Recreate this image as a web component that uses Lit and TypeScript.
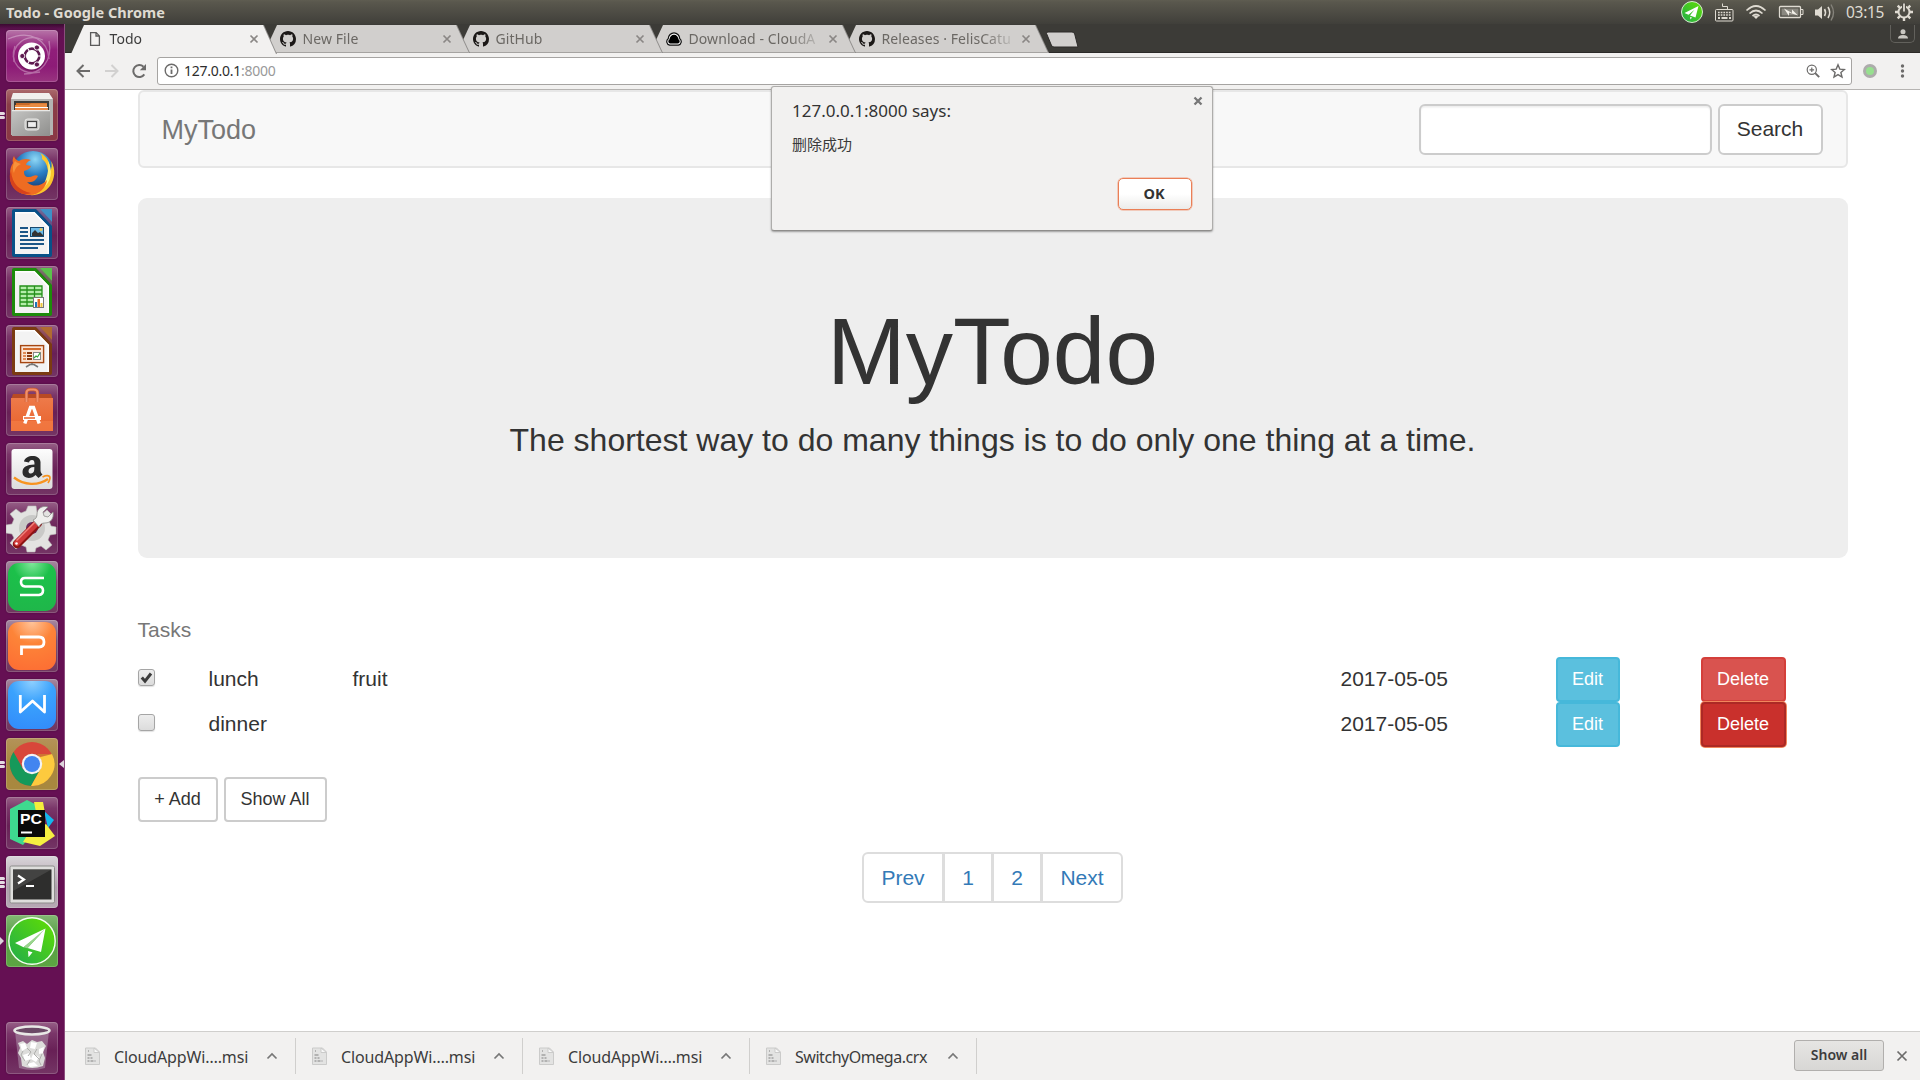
import { LitElement, html, svg, css, nothing, TemplateResult } from "lit";
import { customElement, property } from "lit/decorators.js";
import { classMap } from "lit/directives/class-map.js";

const octocat = svg`<path fill="#1b1817" d="M8 0C3.58 0 0 3.58 0 8c0 3.54 2.29 6.53 5.47 7.59.4.07.55-.17.55-.38 0-.19-.01-.82-.01-1.49-2.01.37-2.53-.49-2.69-.94-.09-.23-.48-.94-.82-1.13-.28-.15-.68-.52-.01-.53.63-.01 1.08.58 1.23.82.72 1.21 1.87.87 2.33.66.07-.52.28-.87.51-1.07-1.78-.2-3.64-.89-3.64-3.95 0-.87.31-1.59.82-2.15-.08-.2-.36-1.02.08-2.12 0 0 .67-.21 2.2.82.64-.18 1.32-.27 2-.27s1.36.09 2 .27c1.53-1.04 2.2-.82 2.2-.82.44 1.1.16 1.92.08 2.12.51.56.82 1.27.82 2.15 0 3.07-1.87 3.75-3.65 3.95.29.25.54.73.54 1.48 0 1.07-.01 1.93-.01 2.2 0 .21.15.46.55.38A8.01 8.01 0 0 0 16 8c0-4.42-3.58-8-8-8z"/>`;
const blankDoc = svg`<path fill="none" stroke="#5a5a5a" stroke-width="1.3" d="M3.6 1.6h5.6l3.2 3.3v9.5H3.6zM9 1.8V5h3.2"/>`;
const cloudApp = svg`<path d="M3.6 14.2a3.6 3.6 0 0 1-1.4-6.4C2.4 4.400 5 1.800 8 1.800s5.600 2.600 5.800 6a3.600 3.600 0 0 1-1.400 6.400z" fill="#fff" stroke="#111" stroke-width="1.2"/><path d="M4.200 12.600a2.200 2.200 0 0 1-.8-4.100C3.600 5.800 5.500 3.700 8 3.700s4.400 2.100 4.600 4.800a2.200 2.200 0 0 1-.8 4.100z" fill="#000"/>`;

interface TabInfo { title: string; icon: TemplateResult; active?: boolean; cut?: boolean; }
const tabs: TabInfo[] = [
  { title: "Todo", icon: blankDoc, active: true },
  { title: "New File", icon: octocat },
  { title: "GitHub", icon: octocat },
  { title: "Download - CloudA", icon: cloudApp, cut: true },
  { title: "Releases · FelisCatu", icon: octocat, cut: true },
];

// Common shapes of the office documents in the launcher.
const officeDoc = (dark: string, light: string, body: TemplateResult) => svg`
  <path d="M8 2h22l16 17v29a2 2 0 0 1-2 2H8a2 2 0 0 1-2-2V4a2 2 0 0 1 2-2z" fill="${dark}"/>
  <path d="M34 2h12v13z" fill="${light}"/><path d="M31 2h3l12 13v4z" fill="${light}" opacity=".35"/>
  <path d="M9 5h19.500L43 20v27H9z" fill="#f3f3f3"/><path d="M9 5h19.500L43 20v27h-1.500V21L28 6.500H9z" fill="#fff"/>
  ${body}`;

const paperPlane = svg`
  <circle cx="26" cy="26" r="23.200" fill="url(#plane)" stroke="#f4fff0" stroke-width="1.400"/>
  <path d="M39.500 13.500 9 28l8.500 4.300L35 18.500 21.500 33l13.500 4z" fill="#fff"/>
  <path d="M22 36l4.500 1.200-4 5z" fill="#fff"/>
  <path d="M39.500 13.500 17.500 32.300l4 1z" fill="#9bd390"/>`;

interface AppTile { name: string; kind?: string; pips?: number; arrow?: boolean; focused?: boolean; icon: TemplateResult; }
const apps: AppTile[] = [
  { name: "Dash", kind: "dash", icon: svg`
    <g fill="none" stroke="#fff" opacity=".32" stroke-width="1.300">
      <path d="M2 9c22-10 40 1 41 20"/><path d="M43 11c4 20-8 33-25 33"/><path d="M34 42C14 46 3 32 9 16"/><path d="M8 32C5 14 20 3 37 10"/></g>
    <circle cx="25.500" cy="27" r="14" fill="#3a0030" opacity=".3"/><circle cx="25.500" cy="26" r="13.500" fill="#fff"/>
    <circle cx="26" cy="26" r="7.300" fill="none" stroke="#5e1a50" stroke-width="2.700"/>
    <g stroke="#fff" stroke-width="1.100"><path d="M26 26l9 0M26 26l-4.500-8M26 26l-4.500 8"/></g><circle cx="26" cy="26" r="5.700" fill="#fff"/>
    <g fill="#5e1a50" stroke="#fff" stroke-width=".9"><circle cx="16.300" cy="26" r="2.600"/><circle cx="30.900" cy="17.500" r="2.600"/><circle cx="30.900" cy="34.500" r="2.600"/></g>` },
  { name: "Files", kind: "files", pips: 2, icon: svg`
    <path d="M7 4h36l4 10v31l-4 2H8l-3-2V14z" fill="#a9a9a7"/><path d="M7 4h36l4 6H5z" fill="#f0f0ee"/><path d="M5 10h42v36H5z" fill="#b4b4b2"/>
    <path d="M8 12h35v11H8z" fill="#3b3b39"/><path d="M10 14h31v8H10z" fill="#c96a28"/><path d="M9 16h14l2-1.500h16V18H9z" fill="#e98b42"/><path d="M9 18h33v1.300H9z" fill="#fff"/><path d="M9 19.300h33V23H9z" fill="#ee8a45"/>
    <path d="M6 21h38v26H6z" fill="url(#cabinet)"/><path d="M6 21h38v1.300H6z" fill="#e8e8e6"/>
    <rect x="19" y="30" width="14" height="11" rx="2.500" fill="#c9c9c7" stroke="#e9e9e7"/><rect x="21.500" y="32.500" width="9" height="6" fill="#eee" stroke="#444" stroke-width="1.200"/>` },
  { name: "Firefox", icon: svg`
    <circle cx="27" cy="24" r="21" fill="url(#globe)"/>
    <path d="M34 5c8 4 10 10 10 18 2-3 2-6 1-10 5 8 4 18-1 25-6 8-16 11-25 8l10-5c10-1 15-9 13-18-1-6-2-9-6-12 0-3 0-4-2-6z" fill="#fbc52c"/>
    <path d="M42 13c5 9 4 21-6 28l4-10c2-6 3-12 2-18z" fill="#fff07a"/>
    <path d="M8 8c1 3 2 4 5 5 3-2 7-3 12-1-3 1-5 3-5 5l5 1c-1 3-4 4-7 5 0 4 1 6 5 6 4 0 6-3 9-1-2 4-5 7-11 6 6 6 15 4 20-2-1 8-8 15-17 15C12 47 3 38 4 26c0-5 1-8 3-11-1-3 0-5 1-7z" fill="#ee6c22"/>
    <path d="M5 23c1 13 9 20 20 22-9 4-23-4-21-19z" fill="#d6421c"/><path d="M9 13c-2 3-3 8-1 12 1-5 4-8 7-9-2-1-4-1-6-3z" fill="#f9913a"/>` },
  { name: "Writer", icon: officeDoc("#085188", "#3e91c6", svg`
    <g fill="#1b5687"><path d="M14 20h8v2h-8zM14 24h8v2h-8zM14 28h8v2h-8zM14 32h24v2H14zM14 36h24v2H14zM14 40h18v2H14z"/></g>
    <rect x="24.500" y="20.500" width="13" height="9" fill="#6dbbe8" stroke="#17496f"/><path d="M26 29v-3l3-3 3 3 2-1 3 3v1z" fill="#333"/><circle cx="35" cy="22.500" r="1.500" fill="#e8c65a"/>`) },
  { name: "Calc", icon: officeDoc("#1d8b0b", "#5bc14c", svg`
    <path d="M14 20h22v20H14z" fill="#b4edaa"/><path d="M14 20h22v20H14zM14 24h22M14 28h22M14 32h22M14 36h22M21 20v20M28.500 20v20" fill="none" stroke="#24901a" stroke-width="1.300"/>
    <rect x="27.500" y="31.500" width="10" height="10" fill="#fff" stroke="#777"/><path d="M29 36h2v5h-2z" fill="#1d75ba"/><path d="M31.500 33h2.500v8h-2.500z" fill="#e46a24"/><path d="M34.500 37h2v4h-2z" fill="#edc63b"/>`) },
  { name: "Impress", icon: officeDoc("#7b3b12", "#b06b31", svg`
    <rect x="14.600" y="20.600" width="23" height="17" fill="#fbe4d4" stroke="#a54611" stroke-width="1.400"/><path d="M17 23h18v2H17z" fill="#d36c2d"/>
    <path d="M17 27h3v2h-3zM17 30h3v2h-3zM17 33h3v2h-3z" fill="#e08a55"/><path d="M21 27h5v2h-5zM21 30h5v2h-5zM21 33h5v2h-5z" fill="#8b3a10"/>
    <rect x="27.500" y="27.500" width="7" height="7" fill="#fff" stroke="#888"/><path d="M28 33l2-2 1.500 1 2.500-4" stroke="#34a638" stroke-width="1.200" fill="none"/>
    <path d="M20 42l4-2.500h4l4 2.500M26 38v2" stroke="#777" stroke-width="1.600" fill="none"/>`) },
  { name: "Software", icon: svg`
    <path d="M7 10h38l2 6H5z" fill="#b84a24"/><path d="M5 14h42v33H5z" fill="url(#bag)"/><path d="M5 37h42v10H5z" fill="#f58049" opacity=".6"/>
    <path d="M20.500 18v-9q0-3.500 4-3.500h3q4 0 4 3.500v9" fill="none" stroke="#c9562b" stroke-width="3.400"/><path d="M20.500 18v-9q0-3.500 4-3.500h3q4 0 4 3.500v9" fill="none" stroke="#f0906c" stroke-width="2.200"/>
    <path d="M18.800 39.500 24.500 23.500h3l5.700 16" stroke="#fff" stroke-width="3.400" fill="none"/><path d="M17 32h18v4H17z" fill="#fff"/><path d="M18 33.300h11v1.500H18z" fill="#e8622c"/>` },
  { name: "Amazon", icon: svg`
    <rect x="5.500" y="6" width="41" height="40" rx="3" fill="url(#paper)"/>
    <path d="M18 18.500c1-7 16-8 16.500.5V27c0 2 .5 3 2 4.500L32.500 35l-3-3c-4 4.500-13 4-13-3 0-5 4-7.500 12-7.600 0-3-.5-4.400-2.500-4.400s-2.500 1-3 2.500zm10.300 5.500c-4 .2-5.800 1.600-5.800 4.200 0 3.400 5.800 3.200 5.800-2z" fill="#2c2c2c"/>
    <path d="M8 34.500c10 8 24 8.500 34 1.500" stroke="#f79420" stroke-width="2.400" fill="none"/><path d="M36.500 34c3-1.500 6-1.500 7-.5s0 4-1.500 6.500" stroke="#f79420" stroke-width="1.800" fill="none"/>` },
  { name: "Settings", icon: svg`
    <g fill="#e3e3e1" stroke="#bdbdbb" stroke-width=".6"><path d="M22 4h8l1 6 5 2 5-4 6 6-4 5 2 5 5 1v7l-6 1-2 5 4 5-6 5-5-4-5 2-1 4h-8l-1-5-5-2-5 4-6-6 4-5-2-4-6-1v-8l6-1 2-5-4-5 6-5 5 4 5-2z"/></g>
    <circle cx="26" cy="26" r="13" fill="#c9c9c7"/><circle cx="26" cy="26" r="6" fill="#6c2a5c"/>
    <path d="M32 21 11 42" stroke="#8d1414" stroke-width="8.500" stroke-linecap="round"/><path d="M32 20 11 41" stroke="#d03a3a" stroke-width="6" stroke-linecap="round"/><path d="M29 20 10.500 38.500" stroke="#f0827c" stroke-width="1.500"/>
    <path d="M27 18c3-1 4-3 4-6 0-5 5-9 11-7l-5 5 1 4 4 1 5-5c1 6-2 11-8 11-3 0-5 1-6 4z" fill="#efefed" stroke="#8f8f8d" stroke-width=".8"/><circle cx="10.500" cy="41.500" r="1.300" fill="#fff"/>` },
  { name: "Spreadsheets", kind: "wps", icon: svg`
    <rect x="2" y="2" width="48" height="48" rx="11" fill="url(#wpsS)"/><path d="M38 17H19q-4 0-4 4t4 4.500h14q4 0 4 4t-4 4.500H14" fill="none" stroke="#fff" stroke-width="2.600"/>` },
  { name: "Presentation", kind: "wps", icon: svg`
    <rect x="2" y="2" width="48" height="48" rx="11" fill="url(#wpsP)"/><path d="M14 17h19q5 0 5 5t-5 5H15.500v8" fill="none" stroke="#fff" stroke-width="2.800"/>` },
  { name: "Documents", kind: "wps", icon: svg`
    <rect x="2" y="2" width="48" height="48" rx="11" fill="url(#wpsW)"/><path d="M14.300 16v17L26.500 22 38.500 33V16" fill="none" stroke="#fff" stroke-width="2.800" stroke-linejoin="round"/>` },
  { name: "Chrome", kind: "chrome", pips: 2, focused: true, icon: svg`
    <circle cx="26" cy="26" r="22" fill="#d8473a"/>
    <path d="M7.500 14A22 22 0 0 0 25 48l9.500-17L26 36l-9-5z" fill="#15995a"/><path d="M46 16A22 22 0 0 1 25 48l9.500-17 1-8L31 16z" fill="#fdca3e"/>
    <path d="M26 16h20.500l-12 3z" fill="#b13a2e" opacity=".6"/><circle cx="26" cy="26" r="10.200" fill="#f3f3f3"/><circle cx="26" cy="26" r="8" fill="#4285f0"/>` },
  { name: "PyCharm", icon: svg`
    <path d="M38 14l10 9-6 8z" fill="#13b8ee"/><path d="M4 12 21 3l10 5-4 28-10 12L4 42z" fill="#3ed98f"/><path d="M28 5h9l2 11-8 4z" fill="#f4ee3c"/><path d="M40 27l9 12-15 10-17-4 5-8z" fill="#f5ef41"/>
    <rect x="12" y="13" width="27" height="27" fill="#0a0a0a"/>
    <text x="14" y="27" font-family="Liberation Sans" font-weight="700" font-size="14.500" fill="#fff" textLength="22" lengthAdjust="spacingAndGlyphs">PC</text><path d="M15 34.500h11v2H15z" fill="#fff"/>` },
  { name: "Terminal", kind: "term", pips: 3, icon: svg`
    <rect x="4" y="10" width="44.500" height="37" rx="1.500" fill="#dededc" stroke="#8d8d8b"/><rect x="7" y="13.500" width="38.500" height="30" fill="#2e2e2d"/><path d="M7 13.500h38.500L7 35z" fill="#4d4d4b" opacity=".7"/>
    <path d="M12 19.500l6 4-6 4" stroke="#fff" stroke-width="2.200" fill="none"/><path d="M20 29h8v2h-8z" fill="#fff"/>` },
  { name: "Plane", kind: "plane", arrow: true, icon: paperPlane },
];

const trash = svg`
  <path d="M9 9h34l-4 37q-13 4-26 0z" fill="#c9bcc7" opacity=".4"/>
  <path d="M12 21l5-2 4 3 5-4 5 2 5-1 4 5-3 6 2 6-2 8q-11 4-21 0l-1-8-3-5 2-5z" fill="#dcdcda"/>
  <g fill="#fff"><path d="M14 22l5-1 2 5-5 3zM25 20l6 1-2 6-5-1zM33 27l5-2-1 6-4 1zM17 33l6-2 2 6-6 2zM27 32l6 3-3 5-5-3zM21 42l7-2 4 4-8 1z"/></g>
  <g stroke="#a8a8a6" fill="none" stroke-width=".9"><path d="M21 26l4 4-3 4M31 27l-3 5 5 5M17 29l-2 4 4 6M36 32l-3 7 2 4M24 38l-3 5"/></g>
  <ellipse cx="26" cy="8.500" rx="17.500" ry="4" fill="#6b4966" stroke="#e8e8e6" stroke-width="2.600"/>`;

@customElement("launcher-tile")
class LauncherTile extends LitElement {
  @property() kind = "";
  @property({ type: Number }) pips = 0;
  @property({ type: Boolean }) arrow = false;
  @property({ type: Boolean }) focused = false;
  @property({ attribute: false }) icon: TemplateResult | null = null;
  static styles = css`
    :host { display: block; position: relative; width: 65px; height: 52px; }
    .tile { box-sizing: border-box; width: 52px; height: 52px; margin-left: 6px; border-radius: 4px; overflow: hidden;
      background: linear-gradient(#976087 0, #7a3669 22%, #682056 55%, #743565 100%);
      box-shadow: inset 0 0 0 1px rgba(255,255,255,.18), 0 0 2px rgba(0,0,0,.3); }
    .dash { background: linear-gradient(#b774a8, #901e7a 38%, #8d1b77 70%, #99347f); }
    .files { background: linear-gradient(#ab6b6d, #8a3d48 30%, #8a3844); }
    .wps { background: linear-gradient(#a688a0, #7b4e70 40%, #71355f); }
    .chrome { background: linear-gradient(#b49359, #a8873f 50%, #a8883f); }
    .term { background: linear-gradient(#d9d5d9, #aea0ac 60%, #b6a9b4); }
    .plane { background: linear-gradient(#83b873, #58a046 40%, #5ca542); }
    svg { display: block; width: 52px; height: 52px; }
    .pips { position: absolute; left: 0; top: 0; height: 52px; display: flex; flex-direction: column; justify-content: center; gap: 1px; }
    .pips i { width: 5px; height: 3px; background: #e4dbe2; border-radius: 0 2px 2px 0; }
    .left, .right { position: absolute; top: 22px; width: 0; height: 0; border: 4px solid transparent; }
    .left { left: 0; border-left-color: #ddd4dc; border-right: 0; }
    .right { right: 1px; border-right: 5px solid #ddd4dc; border-left: 0; }
  `;
  render() {
    return html`<div class="tile ${this.kind}"><svg viewBox="0 0 52 52">
      <defs>
        <linearGradient id="cabinet" x2="1" y2="1"><stop stop-color="#c4c4c2"/><stop offset="1" stop-color="#8f8f8d"/></linearGradient>
        <radialGradient id="globe" cx=".55" cy=".2" r=".8"><stop stop-color="#8fd8f6"/><stop offset=".45" stop-color="#2a7fc4"/><stop offset="1" stop-color="#10285f"/></radialGradient>
        <linearGradient id="bag" x2="0" y2="1"><stop stop-color="#ee7a4a"/><stop offset="1" stop-color="#e8622c"/></linearGradient>
        <linearGradient id="paper" x2="0" y2="1"><stop stop-color="#fdfdfd"/><stop offset="1" stop-color="#dcdcdc"/></linearGradient>
        <radialGradient id="wpsS" cx=".5" cy="0" r="1"><stop stop-color="#7fe79a"/><stop offset=".4" stop-color="#1cc04a"/><stop offset="1" stop-color="#1fb74a"/></radialGradient>
        <radialGradient id="wpsP" cx=".5" cy="0" r="1"><stop stop-color="#ffc49a"/><stop offset=".45" stop-color="#fd8438"/><stop offset="1" stop-color="#fd7034"/></radialGradient>
        <radialGradient id="wpsW" cx=".5" cy="0" r="1"><stop stop-color="#8fd0ff"/><stop offset=".45" stop-color="#3aa2fd"/><stop offset="1" stop-color="#338efb"/></radialGradient>
        <linearGradient id="plane" x1="0" y1="1" x2="1" y2="0"><stop stop-color="#1fab4d"/><stop offset="1" stop-color="#62e000"/></linearGradient>
      </defs>${this.icon}</svg></div>
      ${this.pips ? html`<div class="pips">${Array.from({ length: this.pips }, () => html`<i></i>`)}</div>` : nothing}
      ${this.arrow ? html`<div class="left"></div>` : nothing}
      ${this.focused ? html`<div class="right"></div>` : nothing}`;
  }
}

@customElement("todo-page")
class TodoPage extends LitElement {
  static styles = css`
    :host { display: block; box-sizing: border-box; padding: 0 72.500px; background: #fff; color: #333;
      font: 21px/30px "Liberation Sans", Arial, sans-serif; }
    .nav { box-sizing: border-box; height: 78px; border: 2px solid #e7e7e7; border-radius: 6px; background: #f8f8f8;
      display: flex; align-items: center; padding: 0 23px 0 22px; }
    .brand { flex: 1; font-size: 27px; color: #777; padding-top: 1px; }
    .field { box-sizing: border-box; width: 293px; height: 51px; border: 2px solid #ccc; border-radius: 6px; background: #fff;
      box-shadow: inset 0 1.500px 1.500px rgba(0,0,0,.075); margin-right: 6px; outline: none; }
    .btn { box-sizing: border-box; display: inline-flex; align-items: center; justify-content: center; border: 2px solid #ccc; white-space: nowrap;
      border-radius: 4px; background: #fff; color: #333; height: 45px; font: 18px/27px "Liberation Sans", Arial, sans-serif; padding: 0; }
    .search { width: 105px; height: 51px; font-size: 21px; border-radius: 6px; padding-bottom: 2px; }
    .hero { box-sizing: border-box; height: 360px; margin-top: 30px; padding-top: 101px; border-radius: 9px; background: #eee; text-align: center; }
    h1 { margin: 0 0 15px; font-size: 94.500px; line-height: 104px; font-weight: 400; }
    .lead { margin: 0; font-size: 32px; line-height: 45px; }
    .caption { margin-top: 57px; height: 42px; color: #777; }
    .row { display: grid; grid-template-columns: 71px 144px 988px 215px 145px 86px; height: 45px; align-items: center; }
    .cell { padding-bottom: 2px; }
    .check { box-sizing: border-box; width: 17px; height: 17px; margin-top: -4px; border: 1px solid #a5a5a5; border-radius: 3px;
      background: linear-gradient(#ededed, #dcdcdc); box-shadow: 0 1px 1px rgba(0,0,0,.12); }
    .check svg { display: block; width: 15px; height: 15px; }
    .edit { width: 64px; background: #5bc0de; border-color: #46b8da; color: #fff; }
    .del { width: 85px; background: #d9534f; border-color: #d43f3a; color: #fff; }
    .del.on { background: #c9302c; border-color: #ac2925; box-shadow: 0 0 0 1px #f2865c; }
    .tools { display: flex; gap: 6px; margin-top: 30px; }
    .add { width: 80px; } .all { width: 103px; }
    .pages { display: flex; width: 261px; height: 51px; box-sizing: border-box; margin: 30px auto 0; border: 2px solid #ddd; border-radius: 6px; color: #337ab7; }
    .pages span { box-sizing: border-box; display: flex; align-items: center; justify-content: center; flex: 1; border-left: 3px solid #ddd; }
    .pages span:first-child { flex: 0 0 78px; border-left: 0; }
    .pages span:last-child { flex: 0 0 81px; }
  `;
  private rows = [
    { done: true, name: "lunch", note: "fruit", date: "2017-05-05", on: false },
    { done: false, name: "dinner", note: "", date: "2017-05-05", on: true },
  ];
  render() {
    return html`
      <nav class="nav"><span class="brand">MyTodo</span><input class="field"><button class="btn search">Search</button></nav>
      <section class="hero"><h1>MyTodo</h1><p class="lead">The shortest way to do many things is to do only one thing at a time.</p></section>
      <div class="caption">Tasks</div>
      ${this.rows.map(r => html`<div class="row">
        <span class="check">${r.done ? html`<svg viewBox="0 0 15 15"><path d="M2.800 7.500l3.200 3.700 6-7.700" fill="none" stroke="#3b3b3b" stroke-width="3"/></svg>` : nothing}</span>
        <span class="cell">${r.name}</span><span class="cell">${r.note}</span><span class="cell">${r.date}</span>
        <button class="btn edit">Edit</button>
        <button class=${classMap({ btn: true, del: true, on: r.on })}>Delete</button></div>`)}
      <div class="tools"><button class="btn add">+ Add</button><button class="btn all">Show All</button></div>
      <div class="pages"><span>Prev</span><span>1</span><span>2</span><span>Next</span></div>`;
  }
}

@customElement("app-root")
class AppRoot extends LitElement {
  static styles = css`
    :host { display: grid; grid-template: 24px 1056px / 65px 1855px; width: 1920px; height: 1080px; overflow: hidden; position: relative;
      font-family: "Noto Sans", "Open Sans", "Noto Sans CJK SC", sans-serif; color: #3c3c3c; }
    * { box-sizing: border-box; }
    svg { display: block; flex: none; }
    .panel { grid-column: 1 / 3; display: flex; align-items: center; padding: 0 7px 0 6px; color: #dfdbd2;
      background: linear-gradient(#5f5d51 0, #59574d 10%, #403f3a 100%); white-space: nowrap; }
    .wintitle { flex: 1; font-weight: 700; font-size: 14.500px; letter-spacing: .04px; line-height: 22px; padding-bottom: 1px; }
    .clock { font-size: 15.500px; letter-spacing: -.3px; width: 37px; margin: 0 12px 0 0; }
    .launcher { background: linear-gradient(#3b0a31 0, #5e1150 5px, #651053 14px); border-right: 1px solid #8b4d7d; display: flex; flex-direction: column; gap: 7px; padding: 6px 0; }
    .launcher .spacer { flex: 1; }
    .browser { display: flex; flex-direction: column; min-width: 0; }
    .strip { height: 29px; background: #3c3b37; border-bottom: 1px solid #2c2a28; display: flex; padding-left: 6px; position: relative; }
    .tab { width: 205px; height: 28px; margin: 1px -12px 0 0; flex: none; position: relative; display: flex; align-items: center; padding: 0 16px; font-size: 14px;
      color: #6b6864; white-space: nowrap; filter: drop-shadow(1px 0 0 #8e8c8a); }
    .tab::before { content: ""; position: absolute; inset: 0; background: #d1cfcd; clip-path: polygon(0 100%, 13px 0, 192px 0, 100% 100%); border-bottom: 1px solid #a5a3a1; z-index: -1; }
    .tab.active { color: #3c3c3c; height: 29px; padding-bottom: 1px; }
    .tab.active::before { background: #f2f1f0; border: 0; }
    .tab0 { z-index: 5; } .tab1 { z-index: 4; } .tab2 { z-index: 3; } .tab3 { z-index: 2; } .tab4 { z-index: 1; }
    .label { margin: 0 0 0 6.500px; width: 132px; line-height: 22px; letter-spacing: .08px; padding-bottom: 1px; }
    .cut { -webkit-mask-image: linear-gradient(90deg, #000 100px, transparent 136px); mask-image: linear-gradient(90deg, #000 100px, transparent 136px); }
    .tab .x { margin-left: 7.500px; }
    .plus { margin: 7px 0 0 9px; }
    .user { margin: 1px 5px 0 auto; width: 25px; height: 18px; border: 1px solid #62615c; border-top: 0; border-radius: 0 0 5px 5px; padding: 4px 0 0 6px; }
    .bar { height: 37px; background: #f2f1f0; border-bottom: 1px solid #b6b4b2; display: flex; align-items: center; padding: 0 13px 1px 9px; }
    .bar .nav { margin-right: 9px; }
    .omni { flex: 1; height: 28px; border: 1px solid #a6a4a2; border-radius: 3px; background: #fff; display: flex; align-items: center; padding: 0 5px; margin-left: -1px; font-size: 14px; }
    .url { flex: 1; margin-left: 4px; letter-spacing: -.25px; color: #2d2d2d; } .url em { font-style: normal; color: #999; }
    todo-page { height: 941px; }
    .shelf { flex: 1; border-top: 1px solid #d0cfcd; background: #f2f1f0; display: flex; align-items: center; padding-right: 10px; }
    .item { width: 227px; height: 36px; border-right: 1px solid #d0cfcd; display: flex; align-items: center; padding-left: 16px; font-size: 16px; white-space: nowrap; }
    .item:first-child { width: 231px; padding-left: 20px; }
    .file { width: 133px; margin: 2px 19px 0 14px; letter-spacing: -.14px; }
    .item:nth-child(4) .file { letter-spacing: -.46px; }
    .showall { margin-left: auto; width: 90px; height: 31px; border: 1px solid #b1afad; border-radius: 3px; background: linear-gradient(#e6e5e3, #d8d7d5); font: 600 14px "Noto Sans", sans-serif; color: #3c3c3c; padding: 0 0 2px; margin-right: 10px; margin-bottom: 2px; }
    .dialog { position: absolute; left: 771px; top: 86px; width: 442px; height: 145px; border: 1px solid #aeadab; border-bottom-color: #8e8d8b; border-radius: 3px; background: #f2f1f0;
      box-shadow: 0 1px 2px rgba(0,0,0,.35); padding: 11px 20px 20px; z-index: 9; display: flex; flex-direction: column; }
    .says { font-size: 17px; line-height: 26px; color: #333; }
    .msg { font-size: 15px; line-height: 22px; margin-top: 9px; color: #3a3a3a; font-family: "Noto Sans CJK SC", sans-serif; }
    .ok { margin: auto 0 0 auto; width: 74px; height: 32px; border: 1px solid #ea7f57; box-shadow: 0 0 0 .500px #f0a486; border-radius: 5px; background: linear-gradient(#fff 50%, #ebebea); font: 700 14.500px "Noto Sans", sans-serif; color: #333; padding: 0 2px 2px 0; }
    .close { position: absolute; right: 9px; top: 9px; }
    .status { margin-right: 10px; }
    .star { margin-left: 9px; }
    .omega { margin: 0 20px 0 10px; }
  `;
  private caret = html`<svg width="12" height="8" viewBox="0 0 12 8"><path d="M1.500 6.500 6 2l4.500 4.500" fill="none" stroke="#777" stroke-width="1.700"/></svg>`;
  private fileIcon = html`<svg width="15" height="18" viewBox="0 0 15 18"><path d="M.5 1h10l4 4v12.500H.5z" fill="#e3e3e2" stroke="#cbcbca"/><path d="M9 1v4.500h5.500z" fill="#f8f8f8" stroke="#cbcbca"/><path d="M3 4h1M2.500 8h4M2.500 11h2m1 0h2M2.500 14h2m1 0h3m1 0h1" stroke="#a2a2a1" stroke-width="1.700"/></svg>`;
  render() {
    return html`
      <header class="panel">
        <span class="wintitle">Todo - Google Chrome</span>
        <svg class="status" width="158" height="24" viewBox="1678 0 158 24">
          <defs><linearGradient id="pl" x1="0" y1="1" x2="1" y2="0"><stop stop-color="#1fab4d"/><stop offset="1" stop-color="#62e000"/></linearGradient></defs>
          <circle cx="1692" cy="12" r="10.500" fill="url(#pl)" stroke="#d8ecd0"/><path d="M1698.500 6l-14 7 4 1.800 6-5-4.500 5.800 5.500 1.800zM1690 17l2 .5-1.500 2z" fill="#fff"/>
          <g fill="none" stroke="#dfdbd2"><rect x="1715.500" y="9.500" width="17.500" height="11.500" rx="1"/><path d="M1727.500 9V6.500h-5v-3"/><path d="M1718 12.500h13M1718 15h13" stroke-width="1.700" stroke-dasharray="1.700 1"/><path d="M1718 18h2m1.500 0h6m1.500 0h2" stroke-width="2"/></g>
          <g fill="none" stroke="#dfdbd2" stroke-width="1.700"><path d="M1746.500 10.500q9.500-9 19 0M1749.500 13.500q6.500-6 13 0M1752.500 16q3.500-3 7 0"/></g><path d="M1753.500 16.500l2.500 2.500 2.500-2.500q-2.500-1.500-5 0z" fill="#dfdbd2"/>
          <rect x="1779.500" y="6.500" width="21" height="11" rx="1" fill="none" stroke="#dfdbd2" stroke-width="1.300"/><path d="M1781.500 8.500h17v7h-17z" fill="#8a8880"/><path d="M1801 9.500h2v5h-2" fill="none" stroke="#dfdbd2"/><path d="M1784 8.500l8 4.500v-3.500l6 6-9-3v3.500z" fill="#f2efe8"/>
          <path d="M1815 9.500h3l4-3.500v13l-4-3.500h-3z" fill="#dfdbd2"/><path d="M1824.500 9q2 3.500 0 7M1828 7q3.500 5.500 0 11" fill="none" stroke="#dfdbd2" stroke-width="1.600"/><path d="M1831 4.500q5 8 0 16" fill="none" stroke="#85837b" stroke-width="1.400"/>
        </svg>
        <span class="clock">03:15</span>
        <svg width="18" height="18" viewBox="0 0 18 18"><circle cx="9" cy="9" r="5.500" fill="none" stroke="#dfdbd2" stroke-width="2"/><path d="M9 14v4M0 9h3.500M14.500 9H18M2.700 2.700l2.500 2.500M12.800 12.800l2.500 2.500M2.700 15.300l2.500-2.500M12.800 5.200l2.500-2.500" stroke="#dfdbd2" stroke-width="2.400"/><path d="M7 0h4v8H7z" fill="#4e4c45"/><path d="M9 .5v8" stroke="#dfdbd2" stroke-width="1.800"/></svg>
      </header>
      <aside class="launcher">
        ${apps.map(a => html`<launcher-tile .kind=${a.kind ?? ""} .pips=${a.pips ?? 0} .arrow=${!!a.arrow} .focused=${!!a.focused} .icon=${a.icon}></launcher-tile>`)}
        <div class="spacer"></div><launcher-tile .icon=${trash}></launcher-tile>
      </aside>
      <main class="browser">
        <div class="strip">
          ${tabs.map((t, i) => html`<div class=${classMap({ tab: true, ["tab" + i]: true, active: !!t.active })}>
            <svg width="16" height="16" viewBox="0 0 16 16">${t.icon}</svg><span class=${classMap({ label: true, cut: !!t.cut })}>${t.title}</span>
            <svg class="x" width="10" height="10" viewBox="0 0 10 10"><path d="M1.500 1.500l7 7m0-7l-7 7" stroke="#8a8785" stroke-width="1.700"/></svg></div>`)}
          <svg class="plus" width="34" height="17" viewBox="0 0 34 17"><path d="M3 1h24q2 0 2.700 2l3.300 13H9q-2 0-2.700-2L1.500 2.500Q1.200 1 3 1z" fill="#d1cfcd" stroke="#2c2a28"/></svg>
          <div class="user"><svg width="12" height="10" viewBox="0 0 12 10"><circle cx="6" cy="2.800" r="2.500" fill="#c9c7c1"/><path d="M1 9.500q0-3.500 5-3.500t5 3.500z" fill="#c9c7c1"/></svg></div>
        </div>
        <div class="bar">
          <svg class="nav" width="19" height="18" viewBox="0 0 19 18"><path d="M16 9H4m5.500-6L3.500 9l6 6" fill="none" stroke="#6c6b6a" stroke-width="2"/></svg>
          <svg class="nav" width="19" height="18" viewBox="0 0 19 18"><path d="M3 9h12M9.500 3l6 6-6 6" fill="none" stroke="#d2d1d0" stroke-width="2"/></svg>
          <svg class="nav" width="19" height="18" viewBox="0 0 19 18"><path d="M14.300 12.400A6 6 0 1 1 13.500 4.800" fill="none" stroke="#6c6b6a" stroke-width="2"/><path d="M16 2v6.200H9.800z" fill="#6c6b6a"/></svg>
          <div class="omni">
            <svg width="17" height="17" viewBox="0 0 17 17"><circle cx="8.500" cy="8.500" r="6.300" fill="none" stroke="#6c6b6a" stroke-width="1.400"/><path d="M8.500 7.500v4.500M8.500 4.600v1.700" stroke="#6c6b6a" stroke-width="1.800"/></svg>
            <span class="url">127.0.0.1<em>:8000</em></span>
            <svg width="16" height="16" viewBox="0 0 16 16"><g fill="none" stroke="#6c6b6a" stroke-width="1.200"><circle cx="6.800" cy="6.800" r="4.600"/><path d="M6.800 4.500v4.600M4.500 6.800h4.600"/><path d="M10.200 10.200l4 4" stroke-width="1.900"/></g></svg>
            <svg class="star" width="16" height="16" viewBox="0 0 16 16"><path d="M8 1.800l1.800 4.300 4.600.4-3.500 3 1.100 4.600L8 11.600l-4 2.500 1.100-4.600-3.500-3 4.600-.4z" fill="none" stroke="#6c6b6a" stroke-width="1.400"/></svg>
          </div>
          <svg class="omega" width="16" height="16" viewBox="0 0 16 16"><circle cx="8" cy="8" r="5.500" fill="#97e08f" stroke="#adacab" stroke-width="3"/></svg>
          <svg width="9" height="16" viewBox="0 0 9 16"><g fill="#6c6b6a"><circle cx="4.500" cy="3" r="1.700"/><circle cx="4.500" cy="8" r="1.700"/><circle cx="4.500" cy="13" r="1.700"/></g></svg>
        </div>
        <todo-page></todo-page>
        <footer class="shelf">
          ${["CloudAppWi….msi", "CloudAppWi….msi", "CloudAppWi….msi", "SwitchyOmega.crx"].map(f => html`<div class="item">${this.fileIcon}<span class="file">${f}</span>${this.caret}</div>`)}
          <button class="showall">Show all</button>
          <svg width="16" height="16" viewBox="0 0 16 16"><path d="M3.500 3.500l9 9m0-9l-9 9" stroke="#6c6b6a" stroke-width="1.700"/></svg>
        </footer>
      </main>
      <div class="dialog" role="dialog">
        <div class="says">127.0.0.1:8000 says:</div><div class="msg">删除成功</div><button class="ok">OK</button>
        <svg class="close" width="10" height="10" viewBox="0 0 10 10"><path d="M1.500 1.500l7 7m0-7l-7 7" stroke="#777" stroke-width="2.300"/></svg>
      </div>`;
  }
}
